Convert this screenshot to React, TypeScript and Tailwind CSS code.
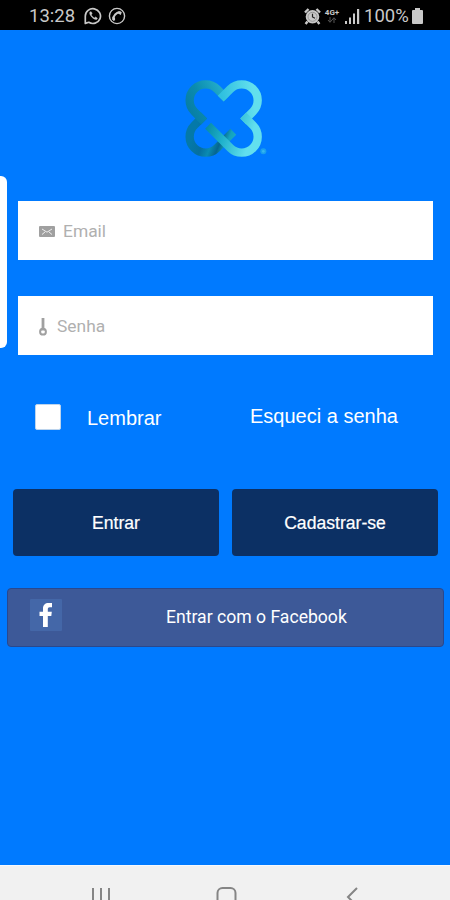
import React from "react";

function StatusBar() {
  return (
    <header className="flex h-[30px] shrink-0 items-center justify-between bg-black pl-[29px] pr-[27px] pt-[2px] font-['Roboto',sans-serif] text-[#c9c9c9]">
      <div className="flex items-center">
        <span className="w-[47px] whitespace-nowrap text-[18.5px] leading-none">13:28</span>
        <svg className="ml-[8px] h-[18px] w-[18px]" viewBox="0 0 18 18" fill="none" stroke="currentColor" strokeWidth="1.7">
          <path d="M1.3 16.4V9a7.6 7.4 0 1 1 3.5 6.3L1.3 16.4Z" strokeLinejoin="round" />
          <path d="M5.8 5.2c-.8 2.500 3.400 7.500 6.600 7.200 1-.2 1-1.100.7-1.500l-1.700-.9-1 .9C9 10.300 7.800 9 7.300 7.800l.8-1.100-.7-1.700c-.5-.3-1.200-.2-1.600.2Z" fill="currentColor" strokeWidth=".5" />
        </svg>
        <svg className="ml-[6px] h-[18px] w-[18px]" viewBox="0 0 18 18" fill="none" stroke="currentColor">
          <circle cx="9" cy="9" r="7.6" strokeWidth="1.4" />
          <path d="M5.200 12.800C4.800 9 8.500 5 12.600 5.400" strokeWidth="2" />
          <path d="M10.300 4.300l3.500.6-1 3-2.700-1.400ZM4.300 10.200l2.700.4.100 2.700-1.800.6Z" fill="currentColor" stroke="none" />
        </svg>
      </div>
      <div className="flex items-center">
        <svg className="mr-px h-[17px] w-[17px]" viewBox="0 0 17 17" fill="none" stroke="currentColor">
          <path d="M1 4.500 4.500 1M16 4.500 12.500 1M3.500 13.500 1.600 16M13.500 13.500 15.400 16" strokeWidth="2.400" />
          <circle cx="8.500" cy="8.800" r="6.800" fill="currentColor" stroke="none" />
          <circle cx="8.500" cy="8.800" r="4.500" stroke="#888" strokeWidth=".8" />
          <path d="M8.500 5.800v3.200l2.500 1.300" stroke="#222" strokeWidth="1.200" />
        </svg>
        <div className="ml-[2px] flex h-[17px] w-[16px] flex-col items-center">
          <span className="text-[8px] font-bold leading-[9px]">4G+</span>
          <svg className="h-[6px] w-[10px] text-[#555]" viewBox="0 0 10 6" fill="none" stroke="currentColor">
            <path d="M3 0v5M1 3l2 2.300L5 3M7 6V1M5 3l2-2.300L9 3" />
          </svg>
        </div>
        <svg className="ml-[5px] h-[15px] w-[15px]" viewBox="0 0 15 15" fill="currentColor">
          <path d="M0 12h2v3H0zM4 8.500h2V15H4zM8 4.500h2V15H8zM12 0h2.200v15H12z" />
        </svg>
        <span className="ml-[4px] w-[47px] whitespace-nowrap text-[18.5px] leading-none">100%</span>
        <svg className="ml-px h-[16px] w-[11px]" viewBox="0 0 11 16" fill="currentColor">
          <path d="M3 0h5v2h2q1 0 1 1v12q0 1-1 1H1q-1 0-1-1V3q0-1 1-1h2z" />
        </svg>
      </div>
    </header>
  );
}

function Logo() {
  return (
    <svg className="mx-auto mt-[35px] block h-[110px] w-[110px] shrink-0" viewBox="0 0 330 330" fill="none">
      <defs>
        <linearGradient id="upperLeft" gradientUnits="userSpaceOnUse" x1="60" y1="150" x2="165" y2="95">
          <stop offset="0" stopColor="#077da5" />
          <stop offset=".45" stopColor="#0b8cae" />
          <stop offset="1" stopColor="#22abc9" />
        </linearGradient>
        <linearGradient id="lowerLeft" gradientUnits="userSpaceOnUse" x1="80" y1="180" x2="195" y2="225">
          <stop offset="0" stopColor="#0479a8" />
          <stop offset=".3" stopColor="#056fa0" />
          <stop offset=".5" stopColor="#0a8bb2" />
          <stop offset=".68" stopColor="#06658f" />
          <stop offset=".85" stopColor="#14a2bd" />
          <stop offset="1" stopColor="#19adc6" />
        </linearGradient>
        <linearGradient id="upperRight" gradientUnits="userSpaceOnUse" x1="155" y1="100" x2="250" y2="90">
          <stop offset="0" stopColor="#2fc0df" />
          <stop offset="1" stopColor="#62dfed" />
        </linearGradient>
        <linearGradient id="lowerRight" gradientUnits="userSpaceOnUse" x1="110" y1="180" x2="240" y2="225">
          <stop offset="0" stopColor="#088ba6" />
          <stop offset=".4" stopColor="#1cafca" />
          <stop offset="1" stopColor="#62dfee" />
        </linearGradient>
      </defs>
      <g strokeWidth="25" strokeLinecap="square">
        <path d="M93.500 160.500 73 181A48 48 0 0 0 141 249L181 209" stroke="url(#lowerLeft)" />
        <path d="M93.500 160.500 73 140A48 48 0 0 1 141 72L161 92" stroke="url(#upperLeft)" />
        <path d="M161 92 181 72A48 48 0 0 1 249 140L228.500 160.500" stroke="url(#upperRight)" />
        <path d="M228.500 160.500 249 181A48 48 0 0 1 181 249L123 191" stroke="url(#lowerRight)" />
      </g>
      <circle cx="280" cy="259" r="9" fill="#1aa0ee" />
      <circle cx="280" cy="259" r="4" fill="#36b6ee" />
    </svg>
  );
}

function Field({ icon, label, gap }: { icon: React.ReactNode; label: string; gap: string }) {
  return (
    <label className={`flex h-[59px] items-center bg-white pl-[21px] pt-[3px] font-['Roboto',sans-serif] text-[17.400px] text-[#b0b0b0] ${gap}`}>
      {icon}
      <span>{label}</span>
    </label>
  );
}

export default function App() {
  return (
    <div className="relative flex h-[900px] w-[450px] flex-col overflow-hidden bg-[#007aff] font-['Liberation_Sans',Arial,sans-serif] text-white">
      <StatusBar />
      <div className="absolute left-0 top-[176px] h-[172px] w-[6.500px] rounded-r-[6px] bg-white" />
      <main className="flex flex-1 flex-col">
        <Logo />
        <div className="ml-[18px] mt-[25.500px] flex w-[415px] flex-col gap-[36px]">
          <Field
            label="Email"
            gap="gap-[8px]"
            icon={
              <svg className="h-[11px] w-[16px]" viewBox="0 0 16 11" fill="none">
                <rect width="16" height="11" rx="1" fill="#a0a0a0" />
                <path d="m3 3 5 3.200L13 3M3 8.500l3.200-2.700M13 8.500 9.800 5.800" stroke="#eee" strokeWidth="1" />
              </svg>
            }
          />
          <Field
            label="Senha"
            gap="gap-[10px]"
            icon={
              <svg className="h-[18px] w-[8px]" viewBox="0 0 8 18" fill="none">
                <path d="M4 0v11" stroke="#a0a0a0" strokeWidth="2.800" />
                <circle cx="4" cy="13.700" r="2.900" stroke="#a0a0a0" strokeWidth="2" />
                <path d="M2.600 10.500h2.800l1.200 2H1.400Z" fill="#a0a0a0" />
              </svg>
            }
          />
        </div>
        <div className="mt-[49.500px] flex h-[26px] items-center">
          <div className="ml-[35px] h-[26px] w-[26px] rounded-[2px] border border-[#bcd4ed] bg-white" />
          <span className="ml-[26px] w-[76px] whitespace-nowrap pt-px text-[20px] leading-6">Lembrar</span>
          <span className="ml-[87px] whitespace-nowrap pb-[2px] text-[20px] leading-6">Esqueci a senha</span>
        </div>
        <div className="ml-[13px] mt-[59px] flex w-[425px] gap-[13px]">
          <button className="h-[67px] flex-1 rounded-[4px] bg-[#0c3064] pt-px text-[17.600px] [-webkit-text-stroke:0.2px_white]">Entrar</button>
          <button className="h-[67px] flex-1 rounded-[4px] bg-[#0c3064] pt-px text-[17.600px] [-webkit-text-stroke:0.2px_white]">Cadastrar-se</button>
        </div>
        <button className="ml-[7px] mt-[32px] flex h-[59px] w-[437px] items-center rounded-[4px] border border-[#29488f] bg-[#3d5998] font-['Roboto',sans-serif] text-[17.600px]">
          <svg className="mb-[5px] ml-[22px] h-[32px] w-[32px]" viewBox="0 0 32 32">
            <rect width="32" height="32" rx="1" fill="#4467a8" />
            <path d="M13 28V17H9.500v-4.300H13V9.700C13 5.900 15.200 4 18.500 4h3.500v4.300h-2.300c-1.400 0-1.900.7-1.900 2v2.400h4l-.5 4.300h-3.500v11Z" fill="white" />
          </svg>
          <span className="ml-[104px] whitespace-nowrap">Entrar com o Facebook</span>
        </button>
      </main>
      <nav className="h-[35px] shrink-0 overflow-hidden border-t border-[#f6f9fe] bg-[#f1f1f1]">
        <svg className="block h-[45px] w-[450px]" viewBox="0 0 450 45" fill="none" stroke="#858585" strokeWidth="2">
          <path d="M93 22v18M101 22v18M109 22v18" />
          <rect x="217.500" y="22" width="18" height="18" rx="5" />
          <path d="m357 22-9 9 9 9" />
        </svg>
      </nav>
    </div>
  );
}
